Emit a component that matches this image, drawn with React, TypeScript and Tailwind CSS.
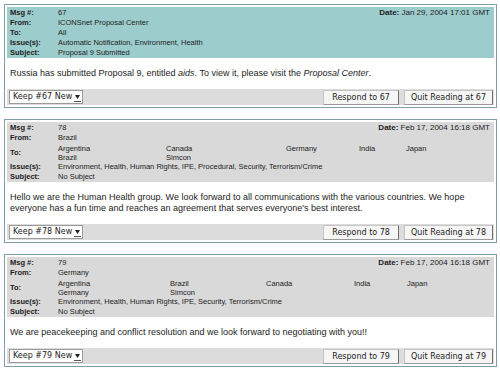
import React from "react";

type Row = { label: string; value?: React.ReactNode; to?: string[][]; cols?: string };

interface MessageProps {
  num: number;
  date: string;
  headerClass: string;
  rows: Row[];
  body: React.ReactNode;
}

const ToGrid = ({ to, cols }: { to: string[][]; cols: string }) => (
  <div className={`grid ${cols} leading-[9px] py-[0.5px]`}>
    {to.map((line, i) =>
      line.map((name, j) => <div key={`${i}-${j}`}>{name}</div>),
    )}
  </div>
);

const Message = ({ num, date, headerClass, rows, body }: MessageProps) => {
  return (
    <div className="border border-[#7d9ea8] bg-white p-[2px]">
      <div className={`${headerClass} relative pl-[3px] pr-[3px] pt-[1px] text-[7.5px]`}>
        <div className="absolute right-[4px] top-[1px] leading-[10px] text-[8px]">
          <span className="font-bold">Date:</span> {date}
        </div>
        <div className="grid grid-cols-[48px_1fr]">
          {rows.map((r) => (
            <React.Fragment key={r.label}>
              <div className="font-bold flex items-center min-h-[10px] leading-[10px]">
                {r.label}
              </div>
              {r.to ? (
                <ToGrid to={r.to} cols={r.cols ?? ""} />
              ) : (
                <div className="leading-[10px]">{r.value}</div>
              )}
            </React.Fragment>
          ))}
        </div>
      </div>
      <div className="px-[3px] py-[10px] text-[9px] leading-[11px]">{body}</div>
      <div
        className="bg-[#dcdcdc] h-[16px] flex items-center justify-between pl-[2px] pr-[1px]"
        style={{ fontFamily: '"DejaVu Sans", sans-serif' }}
      >
        <div className="h-[14px] w-[74px] bg-white border border-[#9a9a9a] flex items-center justify-between pl-[3px] pr-[1px] text-[8px]">
          <span>Keep #{num} New</span>
          <span className="w-[7px] h-[9px] border-b border-[#555] flex items-center justify-center">
            <svg width="5" height="4" viewBox="0 0 5 4">
              <path d="M0 0 L5 0 L2.5 4 Z" fill="#222" />
            </svg>
          </span>
        </div>
        <div className="flex gap-[5px] text-[8px]">
          <button className="h-[15px] px-[8px] bg-[#f6f6f6] border border-[#c4c4c4] border-r-[#6f6f6f] border-b-[#9a9a9a] leading-[13px]">
            Respond to {num}
          </button>
          <button className="h-[15px] px-[6px] bg-[#f6f6f6] border border-[#c4c4c4] border-r-[#6f6f6f] border-b-[#9a9a9a] leading-[13px]">
            Quit Reading at {num}
          </button>
        </div>
      </div>
    </div>
  );
};

export default function App() {
  return (
    <div
      className="w-[500px] h-[372px] bg-white pt-[4px] pl-[4px] pr-[3px] flex flex-col gap-[11px] text-[#1c1c1c]"
      style={{ fontFamily: '"Liberation Sans", Arial, sans-serif' }}
    >
      <Message
        num={67}
        date="Jan 29, 2004 17:01 GMT"
        headerClass="bg-[#9ccccc]"
        rows={[
          { label: "Msg #:", value: "67" },
          { label: "From:", value: "ICONSnet Proposal Center" },
          { label: "To:", value: "All" },
          { label: "Issue(s):", value: "Automatic Notification, Environment, Health" },
          { label: "Subject:", value: "Proposal 9 Submitted" },
        ]}
        body={
          <>
            Russia has submitted Proposal 9, entitled <i>aids</i>. To view it, please visit the{" "}
            <i>Proposal Center</i>.
          </>
        }
      />
      <Message
        num={78}
        date="Feb 17, 2004 16:18 GMT"
        headerClass="bg-[#d9d9d9]"
        rows={[
          { label: "Msg #:", value: "78" },
          { label: "From:", value: "Brazil" },
          {
            label: "To:",
            to: [
              ["Argentina", "Canada", "Germany", "India", "Japan"],
              ["Brazil", "Simcon", "", "", ""],
            ],
            cols: "grid-cols-[108px_120px_73px_47px_1fr]",
          },
          {
            label: "Issue(s):",
            value: "Environment, Health, Human Rights, IPE, Procedural, Security, Terrorism/Crime",
          },
          { label: "Subject:", value: "No Subject" },
        ]}
        body={
          <>
            Hello we are the Human Health group. We look forward to all communications with the
            various countries. We hope everyone has a fun time and reaches an agreement that serves
            everyone's best interest.
          </>
        }
      />
      <Message
        num={79}
        date="Feb 17, 2004 16:18 GMT"
        headerClass="bg-[#d9d9d9]"
        rows={[
          { label: "Msg #:", value: "79" },
          { label: "From:", value: "Germany" },
          {
            label: "To:",
            to: [
              ["Argentina", "Brazil", "Canada", "India", "Japan"],
              ["Germany", "Simcon", "", "", ""],
            ],
            cols: "grid-cols-[112px_96px_88px_53px_1fr]",
          },
          {
            label: "Issue(s):",
            value: "Environment, Health, Human Rights, IPE, Security, Terrorism/Crime",
          },
          { label: "Subject:", value: "No Subject" },
        ]}
        body={<>We are peacekeeping and conflict resolution and we look forward to negotiating with you!!</>}
      />
    </div>
  );
}
